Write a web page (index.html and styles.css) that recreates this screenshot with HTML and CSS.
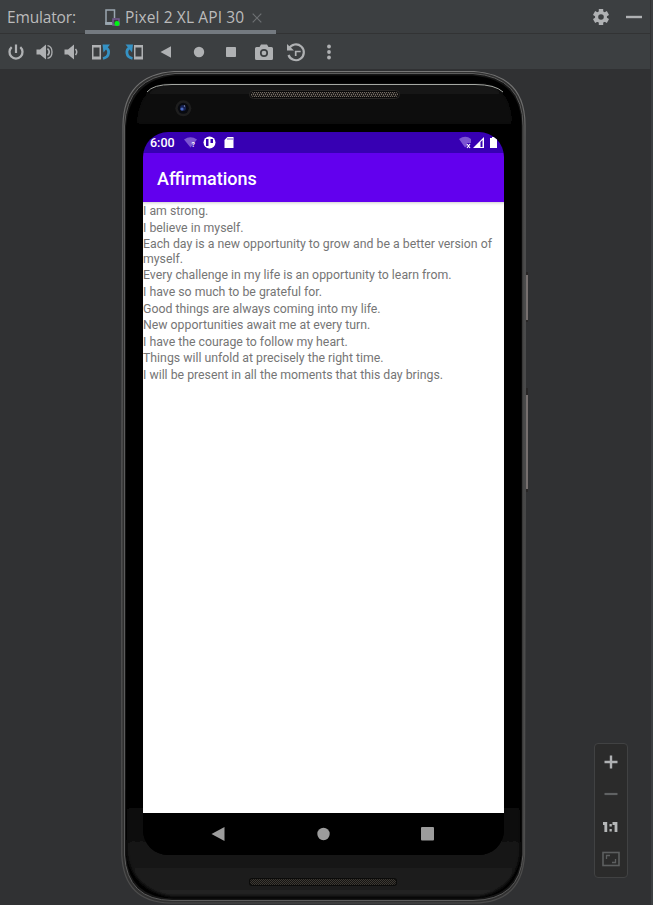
FILE: index.html
```html
<!DOCTYPE html>
<html lang="en">
<head>
<meta charset="utf-8">
<title>Emulator</title>
<link rel="stylesheet" href="styles.css">
</head>
<body>
<div class="window">
  <header class="tabs">
    <span class="label">Emulator:</span>
    <div class="tab">
      <svg class="device" width="17" height="20" viewBox="0 0 17 20"><path d="M10 16H2V2H10.500V10" fill="none" stroke="#9aa7b0" stroke-width="1.500"/><path d="M1.250 14h7v2.800h-7z" fill="#9aa7b0"/><path d="M9 11h6v6H9z" fill="#3c3f41" stroke="#765b91" stroke-width="1.500"/><circle cx="13" cy="15.500" r="2.500" fill="#00f514"/></svg>
      <span class="name">Pixel 2 XL API 30</span>
      <svg class="close" width="10" height="10" viewBox="0 0 10 10"><path d="M.7.7l8.600 8.600M9.300.7L.7 9.300" stroke="#6e7173" stroke-width="1.200"/></svg>
    </div>
    <svg class="gear" width="18" height="18" viewBox="-9 -9 18 18" fill="#afb1b3"><rect x="-2.200" y="-8" width="4.400" height="16"/><rect x="-2.200" y="-8" width="4.400" height="16" transform="rotate(60)"/><rect x="-2.200" y="-8" width="4.400" height="16" transform="rotate(120)"/><circle r="6"/><circle r="2.800" fill="#3c3f41"/></svg>
    <svg class="minimize" width="16" height="4" viewBox="0 0 16 4"><path d="M0 .8h16v2.400H0z" fill="#afb1b3"/></svg>
  </header>
  <nav class="toolbar">
    <svg width="345" height="35" viewBox="0 34 345 35" fill="#afb1b3">
      <path d="M11.700 47.200a6.500 6.500 0 1 0 8.600 0" fill="none" stroke="#afb1b3" stroke-width="2.300"/><path d="M14.900 44.500h2.200V53h-2.200z"/>
      <path d="M36.500 49.500h3.500l6-5v15l-6-5h-3.500z"/><path d="M47.500 48.500q3.500 3.500 0 7" fill="none" stroke="#afb1b3" stroke-width="1.700"/><path d="M47.500 45.700c6 1 6 11.600 0 12.600" fill="none" stroke="#afb1b3" stroke-width="1.300"/>
      <path d="M64.500 49.500H68l6-5v15l-6-5h-3.500z"/><path d="M75.500 49q2.500 3 0 6" fill="none" stroke="#afb1b3" stroke-width="1.500"/>
      <path d="M92 45h9v14.500h-9zM93.500 47.500v9h6v-9z" fill-rule="evenodd"/><path d="M103 58.500c7-1.500 7-9 2.500-11" fill="none" stroke="#3592c4" stroke-width="2.800"/><path d="M102.500 44.500h7.500l-6.500 8z" fill="#3592c4"/>
      <path d="M134 45h9v14.500h-9zM135.500 47.500v9h6v-9z" fill-rule="evenodd"/><path d="M132.500 58.500c-7-1.500-7-9-2.500-11" fill="none" stroke="#3592c4" stroke-width="2.800"/><path d="M133 44.500h-7.500l6.500 8z" fill="#3592c4"/>
      <path d="M160.500 52l10.500-5.800v11.600z"/><circle cx="199" cy="52" r="5.200"/><rect x="226" y="47" width="10" height="10" rx=".8"/>
      <path d="M256.500 47h3l1.500-2.500h6l1.500 2.500h3q1.500 0 1.500 1.500v10q0 1.500-1.500 1.500h-15q-1.500 0-1.500-1.500v-10q0-1.500 1.500-1.500z"/><circle cx="264" cy="53" r="3.200" fill="none" stroke="#3c3f41" stroke-width="1.700"/>
      <path d="M289 48.500a7.900 7.900 0 1 1-.5 6.500" fill="none" stroke="#afb1b3" stroke-width="2.200"/><path d="M287 44v6.500h7z"/><path d="M295.700 56v-4.500h5" fill="none" stroke="#afb1b3" stroke-width="1.700"/>
      <circle cx="329" cy="46.500" r="1.900"/><circle cx="329" cy="52" r="1.900"/><circle cx="329" cy="57.500" r="1.900"/>
    </svg>
  </nav>
  <main class="stage">
    <svg class="shell" width="410" height="836" viewBox="120 69 410 836">
      <defs>
        <linearGradient id="rim" x1="0" y1="0" x2="0" y2="1"><stop offset="0" stop-color="#767676"/><stop offset=".08" stop-color="#626262"/><stop offset="1" stop-color="#4b4b4b"/></linearGradient>
        <linearGradient id="topFace" x1="0" y1="0" x2="0" y2="1"><stop offset="0" stop-color="#151515"/><stop offset="1" stop-color="#060606"/></linearGradient>
        <linearGradient id="chin" x1="0" y1="0" x2="0" y2="1"><stop offset="0" stop-color="#000"/><stop offset=".5" stop-color="#121212"/><stop offset=".65" stop-color="#181818"/><stop offset=".85" stop-color="#1b1b1b"/><stop offset="1" stop-color="#222"/></linearGradient>
        <pattern id="mesh" width="4" height="4" patternUnits="userSpaceOnUse"><path d="M0 0h4v4H0z" fill="#1d1b19"/><path d="M0 0h1v1H0zM2 0h1v1H2zM1 2h1v1H1zM3 2h1v1H3z" fill="#746b62"/><path d="M1 1h1v1H1zM3 3h1v1H3z" fill="#504a45"/></pattern>
        <pattern id="lowerMesh" width="2" height="2" patternUnits="userSpaceOnUse"><path d="M0 0h2v2H0z" fill="#151412"/><path d="M0 0h1v1H0zM1 1h1v1H1z" fill="#3d3933"/></pattern>
        <filter id="soft" x="-5%" y="-5%" width="110%" height="110%"><feGaussianBlur stdDeviation="1.500"/></filter>
      </defs>
      <path d="M526 272h2v50h-2zM526 388h2v104h-2z" fill="#282626"/><path d="M527 275v45M527 395v94" stroke="#aaa09e" stroke-width="1.200"/>
      <path d="M174 71.500H474Q525 75 525 125V510L524.500 855Q522 902.500 474 903H170Q124 902 121.800 855V495L123 125Q124 75 174 71.500Z" fill="#303030" stroke="url(#rim)" stroke-width="1.200"/>
      <path d="M175 73.500H473Q523 77 523 126V855Q520 900 473 900.500H172Q127 900 124.500 855V126Q127 77 175 73.500Z" fill="#151515" stroke="#5c5c5c"/>
      <path d="M176 75.500H472Q521.500 79 521.500 127V855Q518 898 472 898.500H174Q129 898 126 855V127Q130 79 176 75.500Z" fill="#000"/>
      <path d="M137 124V118Q142 85 170 84H480Q508 85 512 118V124Z" fill="url(#topFace)" filter="url(#soft)"/>
      <path d="M127 790H520V852Q516 889 480 896H170Q132 889 127 852Z" fill="url(#chin)" filter="url(#soft)"/>
      <path d="M147 92Q153 84.500 172 84.500H475Q495 84.500 503 92" fill="none" stroke="#a5a8a3"/>
      <rect x="249.500" y="90.500" width="150" height="8" rx="4" fill="#080808" stroke="#292725"/>
      <rect x="251" y="92" width="147" height="5" rx="2.500" fill="url(#mesh)"/>
      <rect x="249" y="878" width="148" height="8" rx="3" fill="#0b0b0a"/><rect x="250" y="879" width="146" height="6" rx="3" fill="url(#lowerMesh)"/>
      <circle cx="183.300" cy="108.300" r="8" fill="#1e1e1e"/><circle cx="183.300" cy="108.300" r="5.500" fill="#080a10"/><circle cx="183" cy="108" r="3" fill="#172150"/><circle cx="182" cy="109" r="1.600" fill="#4968bd"/><circle cx="184.500" cy="106" r=".7" fill="#8b94b6"/>
    </svg>
    <section class="screen">
      <div class="status">
        <span class="clock">6:00</span>
        <svg class="notices" width="52" height="13" viewBox="183 136 52 13"><path d="M184 139.500q6.500-4.500 13 0l-6.500 8z" fill="#7c55d2"/><text class="unknown" x="191.500" y="147">?</text><circle cx="209.500" cy="142.500" r="6" fill="#fff"/><path d="M206 139h2.500v7h-2.500zM210.500 139h2.500v4h-2.500z" fill="#3700b3"/><path d="M227.500 137h6v11h-9v-8z" fill="#fff"/><path d="M228 138v2M230 138v2M232 138v2" stroke="#3700b3" stroke-width=".7"/></svg>
        <svg class="signals" width="40" height="13" viewBox="458 136 40 13"><path d="M459 139q6.500-4.500 12 0v4h-4v3l-2 1.500z" fill="#7c55d2"/><path d="M467 144l3 4M470 144l-3 4" stroke="#fff" stroke-width="1.200"/><path d="M473 148l11-11v11z" fill="#fff"/><path d="M480.500 142l2-2v7h-2z" fill="#3700b3"/><path d="M490 138h2v-1h3v1h2v10h-7z" fill="#fff"/></svg>
      </div>
      <h1 class="appbar">Affirmations</h1>
      <ul class="list">
        <li>I am strong.</li>
        <li>I believe in myself.</li>
        <li>Each day is a new opportunity to grow and be a better version of myself.</li>
        <li>Every challenge in my life is an opportunity to learn from.</li>
        <li>I have so much to be grateful for.</li>
        <li>Good things are always coming into my life.</li>
        <li>New opportunities await me at every turn.</li>
        <li>I have the courage to follow my heart.</li>
        <li>Things will unfold at precisely the right time.</li>
        <li>I will be present in all the moments that this day brings.</li>
      </ul>
      <svg class="navbar" width="361" height="42" viewBox="143 813 361 42" fill="#9c9c9c"><path d="M211.500 834l13-7v14z"/><circle cx="323.500" cy="834" r="6.200"/><rect x="421" y="827" width="13" height="13.500" rx="1"/></svg>
    </section>
    <aside class="zoom">
      <svg width="34" height="135" viewBox="594 743 34 135"><path d="M604.500 762h13M611 755.500v13" stroke="#afb1b3" stroke-width="2.400"/><path d="M604.500 794h13" stroke="#606263" stroke-width="2.200"/><path d="M603 823.500h2.800V832M612.500 823.500h3.500V832" fill="none" stroke="#b5b7b8" stroke-width="2.800"/><path d="M609.500 824h2.300v2.500h-2.300zM609.500 829h2.300v2.500h-2.300z" fill="#b5b7b8"/><rect x="603" y="852.500" width="16" height="13" fill="none" stroke="#5d5f60" stroke-width="1.600"/><path d="M606.500 859v-3.500h3.500M615.500 859v3.500H612" fill="none" stroke="#5d5f60" stroke-width="1.300"/></svg>
    </aside>
  </main>
</div>
</body>
</html>
```
FILE: styles.css
```css
* { box-sizing: border-box; }
body { margin: 0; background: #3c3f41; overflow: hidden; }
svg { display: block; flex: none; }
.window { width: 653px; height: 905px; display: flex; flex-direction: column; }
.tabs { height: 34px; width: 651px; display: flex; align-items: flex-start; border-bottom: 1px solid #323334; border-right: 1px solid #323334; font: 15.5px/20px "Open Sans", "Noto Sans", sans-serif; color: #bbb; }
.label { width: 78px; padding: 7px 0 0 7px; letter-spacing: -.15px; white-space: nowrap; }
.tab { width: 191px; height: 34px; margin-left: 7px; padding-left: 19px; display: flex; border-bottom: 4px solid #747a80; }
.device { margin-top: 8px; }
.name { width: 123px; margin: 7px 0 0 4px; letter-spacing: .12px; white-space: nowrap; }
.close { margin: 13px 0 0 4px; }
.gear { margin: 8px 0 0 316px; }
.minimize { margin: 15px 0 0 16px; }
.toolbar { height: 35px; width: 651px; border-right: 1px solid #323334; }
.stage { width: 651px; height: 836px; display: grid; grid-template-columns: 120px 23px 361px 26px 64px 34px; grid-template-rows: 63px 1fr 50px; background: #303133; }
.shell { grid-column: 2 / 5; grid-row: 1 / 4; }
.screen { grid-column: 3; grid-row: 2; display: flex; flex-direction: column; border-radius: 25px; overflow: hidden; background: #000; font-family: Roboto, sans-serif; }
.status { height: 21px; display: flex; align-items: center; background: #3700b3; color: #fff; }
.clock { width: 33px; margin-left: 7px; font-size: 12.5px; font-weight: 500; line-height: 21px; }
.unknown { font: bold 7px Roboto, sans-serif; fill: #fff; }
.signals { margin-left: auto; margin-right: 6px; }
.appbar { margin: 0; height: 49px; padding-left: 14px; background: #6200ee; color: #fff; font-size: 18px; font-weight: 500; line-height: 51px; }
.list { flex: 1; margin: 0; padding: 0; list-style: none; background: #fff; color: #757575; font-size: 12.3px; line-height: 14.4px; box-shadow: inset 0 3px 3px -2px #ccc; }
.list li { padding-top: 2.2px; }
.navbar { background: #000; }
.zoom { grid-column: 6; grid-row: 1 / 4; height: 135px; margin-top: 674px; border: 1px solid #414243; border-radius: 4px; background: #2b2b2b; }
.zoom svg { margin: -1px; }
```
